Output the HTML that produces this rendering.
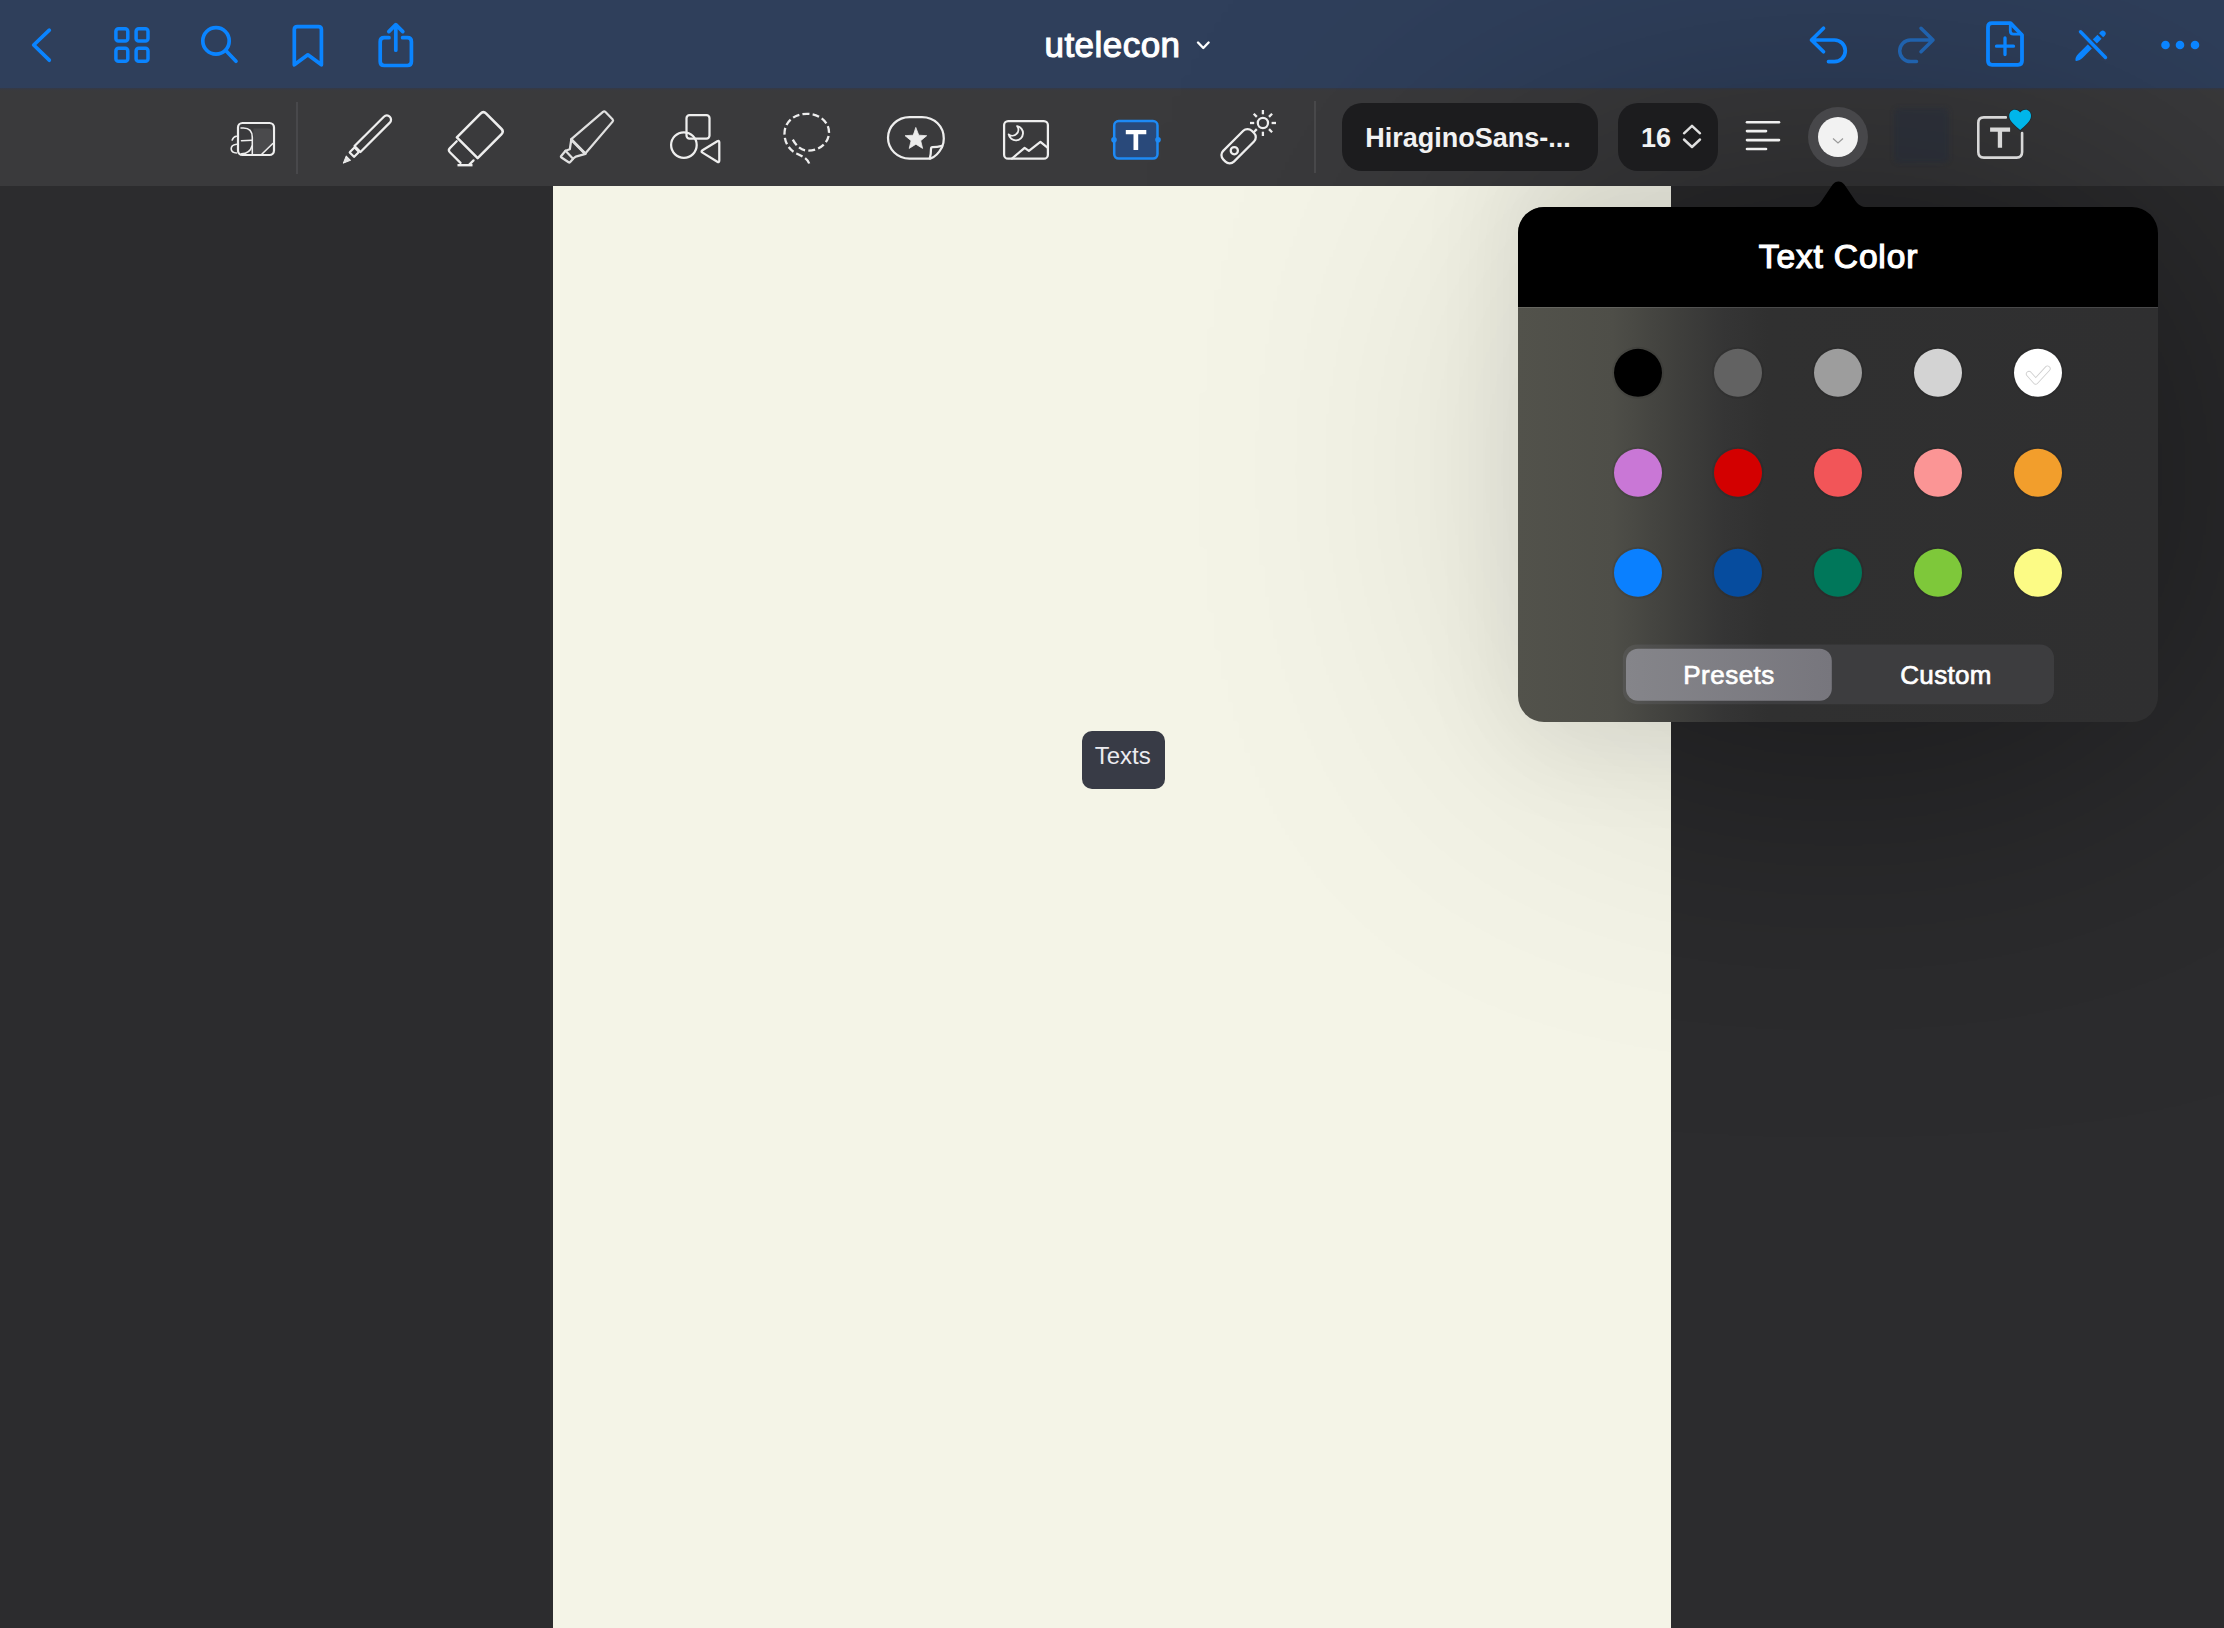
<!DOCTYPE html>
<html><head><meta charset="utf-8">
<style>
html,body{margin:0;padding:0;}
body{width:2224px;height:1628px;position:relative;overflow:hidden;background:#2c2c2e;font-family:"Liberation Sans",sans-serif;}
.abs{position:absolute;}
#nav{left:0;top:0;width:2224px;height:88px;background:#2f3f5b;}
#tool{left:0;top:88px;width:2224px;height:98px;background:linear-gradient(180deg,#33394a 0px,#393a3e 2px,#3a3a3c 4px,#3a3a3c 98px);}
#paper{left:553px;top:186px;width:1118px;height:1442px;background:#f4f4e7;}
#pop{left:1518px;top:207px;width:640px;height:515px;border-radius:26px;overflow:hidden;background:linear-gradient(90deg,#52524b 0px,#4e4e48 95px,#40403d 155px,#353535 205px,#303030 250px,#2f2f30 640px);}
#pophead{left:0;top:0;width:640px;height:100px;background:#000;}
#tip{left:1082px;top:731px;width:83px;height:58px;border-radius:10px;background:#383b46;}
svg{position:absolute;left:0;top:0;}
</style></head>
<body>
<div id="nav" class="abs"></div>
<div id="tool" class="abs"></div>
<div id="paper" class="abs"></div>
<div id="tip" class="abs"></div>
<svg width="2224" height="1628" style="position:absolute;left:0;top:0">
  <defs>
    <filter id="sh2" x="-150%" y="-150%" width="400%" height="400%"><feGaussianBlur stdDeviation="185"/></filter>
    <clipPath id="cpPaper"><rect x="553" y="186" width="1118" height="1442"/></clipPath>
    <clipPath id="cpDark"><path d="M0,0 H2224 V1628 H0 Z M553,186 V1628 H1671 V186 Z" clip-rule="evenodd"/></clipPath>
  </defs>
  <g clip-path="url(#cpDark)"><rect x="1518" y="217" width="640" height="515" rx="26" fill="#000" opacity="0.55" filter="url(#sh2)"/></g>
  <filter id="sh3" x="-50%" y="-50%" width="200%" height="200%"><feGaussianBlur stdDeviation="55"/></filter>
  <g clip-path="url(#cpPaper)"><rect x="1518" y="200" width="640" height="540" rx="26" fill="#000" opacity="0.12" filter="url(#sh2)"/><rect x="1518" y="150" width="640" height="590" rx="26" fill="#000" opacity="0.085" filter="url(#sh3)"/></g>
</svg>
<div id="pop" class="abs"><div id="pophead" class="abs"></div><div class="abs" style="left:0;top:100px;width:640px;height:1px;background:rgba(255,255,255,0.12)"></div></div>
<svg width="2224" height="1628" viewBox="0 0 2224 1628">
  <!-- NAV ICONS -->
  <g fill="none" stroke="#0a84ff" stroke-width="3.7" stroke-linecap="round" stroke-linejoin="round">
    <path d="M49.3,30.2 L33.7,45 L49.3,60.2"/>
    <rect x="115.9" y="28.7" width="11.9" height="12.4" rx="2.6" stroke-width="3.5"/>
    <rect x="136.1" y="28.7" width="11.9" height="12.4" rx="2.6" stroke-width="3.5"/>
    <rect x="115.9" y="48.3" width="11.9" height="13" rx="2.6" stroke-width="3.5"/>
    <rect x="136.1" y="48.3" width="11.9" height="13" rx="2.6" stroke-width="3.5"/>
    <circle cx="216" cy="40.9" r="13.2"/>
    <path d="M226,50.8 L236,61.2"/>
    <path d="M294.3,29.6 Q294.3,26.6 297.3,26.6 L318.4,26.6 Q321.4,26.6 321.4,29.6 L321.4,64.8 L307.85,54.8 L294.3,64.8 Z"/>
    <path d="M389,37.7 L384.2,37.7 Q380.2,37.7 380.2,41.7 L380.2,61.5 Q380.2,65.5 384.2,65.5 L407.4,65.5 Q411.4,65.5 411.4,61.5 L411.4,41.7 Q411.4,37.7 407.4,37.7 L402.6,37.7"/>
    <path d="M395.8,50.2 L395.8,25 M388.8,31.6 L395.8,24.6 L402.8,31.6"/>
    <path d="M1823.5,28.3 L1811.5,40 L1823.5,51.7 M1811.5,40 L1834.5,40 A10.8,10.8 0 0 1 1834.5,61.6 L1828.5,61.6"/>
    <path d="M1992.5,23.2 L2010.5,23.2 L2022,35 L2022,60.8 Q2022,64.8 2018,64.8 L1992,64.8 Q1988,64.8 1988,60.8 L1988,27.2 Q1988,23.2 1992,23.2 Z" stroke-width="3.8"/>
    <path d="M2010.3,24 L2010.3,31 Q2010.3,34.2 2013.5,34.2 L2021.5,34.2" stroke-width="2.8"/>
    <path d="M2005,38 L2005,54.5 M1996.5,46.2 L2013.5,46.2" stroke-width="3.3"/>
  </g>
  <g fill="none" stroke="#2062ad" stroke-width="3.5" stroke-linecap="round" stroke-linejoin="round">
    <path d="M1921,28.3 L1933,40 L1921,51.7 M1933,40 L1910.5,40 A10.8,10.8 0 0 0 1910.5,61.6 L1916.5,61.6"/>
  </g>
  <g fill="#0a84ff">
    <g transform="translate(2075.5,60.8) rotate(-45)">
      <path d="M0,0 Q2,-2.9 7,-2.9 L34,-2.9 L34,2.9 L7,2.9 Q2,2.9 0,0 Z"/>
      <path d="M36.2,-2.9 L38.5,-2.9 A2.9,2.9 0 0 1 38.5,2.9 L36.2,2.9 Z"/>
    </g>
    <circle cx="2165.5" cy="45" r="4.3"/>
    <circle cx="2180" cy="45" r="4.3"/>
    <circle cx="2195" cy="45" r="4.3"/>
  </g>
  <path d="M2080.5,31.8 L2105.5,57.5" stroke="#2e3c57" stroke-width="7" stroke-linecap="round"/>
  <path d="M2080.5,31.8 L2105.5,57.5" stroke="#0a84ff" stroke-width="3.4" stroke-linecap="round"/>
  <text x="1112.5" y="57.3" font-family="Liberation Sans" font-size="35" letter-spacing="0.45" fill="#ffffff" stroke="#ffffff" stroke-width="1.1" text-anchor="middle">utelecon</text>
  <path d="M1198,42.5 L1203.3,48 L1208.6,42.5" fill="none" stroke="#fff" stroke-width="2.4" stroke-linecap="round" stroke-linejoin="round"/>

  <!-- TOOLBAR -->
  <line x1="297" y1="102" x2="297" y2="174" stroke="#4e4e50" stroke-width="1.5"/>
  <line x1="1315" y1="101" x2="1315" y2="173" stroke="#4e4e50" stroke-width="1.5"/>
  <rect x="1342" y="103" width="256" height="68" rx="20" fill="#1c1c1e"/>
  <rect x="1618" y="103" width="100" height="68" rx="20" fill="#1c1c1e"/>
  <text x="1468" y="146.5" font-family="Liberation Sans" font-weight="bold" font-size="27" fill="#f2f2f2" text-anchor="middle">HiraginoSans-...</text>
  <text x="1656" y="146.5" font-family="Liberation Sans" font-weight="bold" font-size="27" fill="#f2f2f2" text-anchor="middle">16</text>
  <path d="M1684,133.3 L1692,125.8 L1700,133.3 M1684,139.5 L1692,147 L1700,139.5" fill="none" stroke="#e0e0e0" stroke-width="2.4" stroke-linecap="round" stroke-linejoin="round"/>
  <g stroke="#f0f0f0" stroke-width="2.6" stroke-linecap="round">
    <line x1="1747" y1="122.3" x2="1779" y2="122.3"/>
    <line x1="1747" y1="131.1" x2="1766" y2="131.1"/>
    <line x1="1747" y1="140.1" x2="1779" y2="140.1"/>
    <line x1="1747" y1="149" x2="1766" y2="149"/>
  </g>
  <circle cx="1838" cy="137" r="30" fill="#47474a"/>
  <circle cx="1838" cy="137" r="20" fill="#f2f2f2"/>
  <path d="M1833,138.5 L1838,143 L1843,138.5" fill="none" stroke="#9a9a9a" stroke-width="1.2"/>
  <defs><filter id="fblur" x="-20%" y="-20%" width="140%" height="140%"><feGaussianBlur stdDeviation="2.5"/></filter></defs>
  <rect x="1894" y="108" width="55" height="55" rx="6" fill="#232a3a" opacity="0.45" filter="url(#fblur)"/>

  <!-- TOOLBAR ICONS -->
  <g fill="none" stroke="#eeeeee" stroke-width="2.25" stroke-linecap="round" stroke-linejoin="round">
    <!-- readonly a box -->
    <rect x="238" y="123" width="36" height="32" rx="4.5" stroke-width="2.2"/>
    <path d="M253.5,128.5 L268,128.5 Q272.5,128.5 272.5,133 L272.5,143.5 L261.5,154 L253.5,154 Z" fill="#4a4a4c" stroke="none"/>
    <path d="M272.8,143.5 L261.5,154.5" stroke-width="1.6"/>
    <g stroke-width="1.6">
      <path d="M241,128 L243.5,128 Q252.3,128 252.3,137.5 L252.3,154"/>
      <path d="M252,140.3 L241.5,140.8"/>
      <path d="M252,146 Q250,153.5 241.5,153.8"/>
      <path d="M232.2,140 Q233.5,136.5 236.5,136.3"/>
      <path d="M236.5,144.3 Q231,145 231.2,149 Q231.5,152.8 236.5,153"/>
    </g>
    <!-- pen -->
    <g transform="translate(343,163.5) rotate(-45)">
      <path d="M0.5,0 L7.5,-3 L7.5,3 Z" fill="#e6e6e6" stroke-width="1"/>
      <rect x="12.5" y="-3.2" width="7" height="6.4" rx="0.5"/>
      <path d="M20.5,-4.2 L62,-4.2 A4.2,4.2 0 0 1 62,4.2 L20.5,4.2 Z"/>
    </g>
    <!-- eraser -->
    <g transform="translate(455.3,137.3) rotate(-45)">
      <path d="M1.1,1.1 L34.6,1.1 Q38.6,1.1 38.6,5.1 L38.6,26.5 Q38.6,30.5 34.6,30.5 L1.1,30.5 Z" stroke-width="2.5"/>
      <path d="M-1.8,3.8 L-11.5,3.8 Q-14.4,3.8 -14.4,6.7 L-14.4,21.8"/>
      <path d="M-9.4,29.2 L-3.4,29.2"/>
    </g>
    <path d="M457.5,165.2 L472.5,165.2" stroke-width="2.4" stroke-linecap="butt"/>
    <!-- highlighter -->
    <path d="M571.3,139.2 L603,111.8 Q604.3,110.8 605.5,112 L612.5,119.2 Q613.6,120.4 612.6,121.6 L585.3,153.6 Z" stroke="#e0e0e0"/>
    <path d="M571.4,139.7 L585,153.4" stroke="#e0e0e0" stroke-width="2.8"/>
    <path d="M571.3,139.5 L569.8,149.3 L565.5,150.8 L573,158.7 L575.8,156.6 L585.5,153.8" stroke="#e0e0e0"/>
    <path d="M565.5,150.8 L561.2,155.9 Q560.5,156.8 561.5,157.5 L568.6,162.3 Q569.4,162.8 570.2,162 L573,159" stroke="#e0e0e0"/>
    <!-- shapes -->
    <rect x="686.5" y="115.2" width="23" height="23.4" rx="3"/>
    <circle cx="683.9" cy="145.1" r="12.8"/>
    <path d="M702.5,150.2 L717.3,141.2 Q719.3,140 719.3,142.3 L719.3,160.6 Q719.3,162.9 717.3,161.7 L702.5,152.6 Q700.6,151.4 702.5,150.2 Z"/>
    <!-- lasso -->
    <path d="M809.2,163.5 C807.5,158.5 802,156 796.5,153.5 C788.5,149.5 784.5,142 784.5,133.5 C784.5,121.5 794.5,113.8 807,113.8 C819.5,113.8 829,122 829,132.3 C829,143 819.5,150.6 808,150.6 C800.5,150.6 795.5,145 792.3,138.7" stroke-dasharray="6.8 3.2" stroke-linecap="butt" stroke-width="2.3"/>
    <!-- sticker -->
    <path d="M909.5,117 L922,117 C934.5,117 943.8,126.5 943.8,138.5 C943.8,141.6 943.2,144.8 942,147.2 C938.5,153.8 933.5,157.5 930.2,158.6 L909.5,158.6 C897.5,158.6 888,149.3 888,137.8 C888,126.3 897.5,117 909.5,117 Z"/>
    <path d="M942.2,145.8 Q937,147.2 932.5,147.2 Q931,147.3 931,149 Q931,154 929.8,158.4"/>
    <path d="M915.9,127.8 L918.8,135.2 L926.7,135.7 L920.7,140.7 L922.6,148.4 L915.9,144.2 L909.2,148.4 L911.1,140.7 L905.1,135.7 L913.0,135.2 Z" fill="#ececec" stroke="#ececec" stroke-width="0.8"/>
    <!-- image -->
    <rect x="1004.1" y="121" width="43.8" height="37.7" rx="4"/>
    <path d="M1017.2,126.1 A7.2,7.2 0 1 1 1008.7,134.4 A6,6 0 0 0 1017.2,126.1 Z" stroke-width="1.9"/>
    <path d="M1012,158.5 L1024.6,147.8 L1028.9,150.8 L1040.4,141.9 L1047.2,147.4"/>
    <!-- laser -->
    <g transform="translate(1238.6,146.2) rotate(-45)">
      <rect x="-20.2" y="-7.6" width="40.4" height="15.2" rx="6"/>
    </g>
    <circle cx="1234.3" cy="150.7" r="3.6"/>
    <circle cx="1262.9" cy="123" r="5.1"/>
    <g stroke-width="2.3" stroke-linecap="butt">
      <path d="M1262.9,110 L1262.9,114.3"/>
      <path d="M1262.9,131.7 L1262.9,136"/>
      <path d="M1250,123 L1254.2,123"/>
      <path d="M1271.6,123 L1276,123"/>
      <path d="M1253.7,113.8 L1256.8,116.9"/>
      <path d="M1269,129.1 L1272.1,132.2"/>
      <path d="M1272.1,113.8 L1269,116.9"/>
      <path d="M1256.8,129.1 L1253.7,132.2"/>
    </g>
  </g>
  <!-- selected text tool -->
  <rect x="1114.2" y="121" width="43.3" height="37.6" rx="4.5" fill="#29497a" stroke="#1e8af5" stroke-width="2.5"/>
  <circle cx="1114" cy="139.7" r="2.8" fill="#1e8af5"/>
  <circle cx="1158" cy="139.7" r="2.8" fill="#1e8af5"/>
  <path d="M1125.8,129.9 L1146.3,129.9 L1146.3,134.2 L1138.2,134.2 L1138.2,150 L1133.5,150 L1133.5,134.2 L1125.8,134.2 Z" fill="#ffffff"/>
  <!-- T box with heart -->
  <path d="M2005.8,117.4 L1983.8,117.4 Q1978.3,117.4 1978.3,122.9 L1978.3,152.1 Q1978.3,157.6 1983.8,157.6 L2016.6,157.6 Q2022.1,157.6 2022.1,152.1 L2022.1,133.1" fill="none" stroke="#d8d8d8" stroke-width="2.6" stroke-linecap="round"/>
  <path d="M1990.1,127.5 L2010.1,127.5 L2010.1,131.8 L2002.1,131.8 L2002.1,147.7 L1997.8,147.7 L1997.8,131.8 L1990.1,131.8 Z" fill="#d8d8d8"/>
  <path d="M2020.2,130.1 C2016,126 2009.2,121.5 2009.2,116 C2009.2,112.3 2011.8,109.8 2014.8,109.8 C2017.2,109.8 2019,111 2020.2,112.6 C2021.4,111 2023.2,109.8 2025.6,109.8 C2028.6,109.8 2031,112.3 2031,116 C2031,121.5 2024.4,126 2020.2,130.1 Z" fill="#00b6ea" stroke="#1e2a30" stroke-width="1.6" paint-order="stroke"/>

  <!-- POPOVER CONTENT -->
  <path d="M1807,207.5 C1814,207.5 1818.5,205.5 1821.5,201 L1832.5,184.8 C1835.5,180.3 1841.5,180.3 1844.5,184.8 L1855.5,201 C1858.5,205.5 1863,207.5 1870,207.5 Z" fill="#000"/>
  <text x="1838.5" y="268.2" font-family="Liberation Sans" font-size="33.5" letter-spacing="0.85" fill="#ffffff" stroke="#ffffff" stroke-width="1.2" text-anchor="middle">Text Color</text>
  <g fill="none" stroke="#000" stroke-opacity="0.07" stroke-width="2"><circle cx="1638" cy="372.8" r="25"/><circle cx="1738" cy="372.8" r="25"/><circle cx="1838" cy="372.8" r="25"/><circle cx="1938" cy="372.8" r="25"/><circle cx="2038" cy="372.8" r="25"/><circle cx="1638" cy="472.8" r="25"/><circle cx="1738" cy="472.8" r="25"/><circle cx="1838" cy="472.8" r="25"/><circle cx="1938" cy="472.8" r="25"/><circle cx="2038" cy="472.8" r="25"/><circle cx="1638" cy="572.8" r="25"/><circle cx="1738" cy="572.8" r="25"/><circle cx="1838" cy="572.8" r="25"/><circle cx="1938" cy="572.8" r="25"/><circle cx="2038" cy="572.8" r="25"/></g>
  <g>
    <circle cx="1638" cy="372.8" r="24" fill="#000000"/>
    <circle cx="1738" cy="372.8" r="24" fill="#626262"/>
    <circle cx="1838" cy="372.8" r="24" fill="#9d9d9d"/>
    <circle cx="1938" cy="372.8" r="24" fill="#d3d3d3"/>
    <circle cx="2038" cy="372.8" r="24" fill="#ffffff"/>
    <circle cx="1638" cy="472.8" r="24" fill="#c977d6"/>
    <circle cx="1738" cy="472.8" r="24" fill="#d30000"/>
    <circle cx="1838" cy="472.8" r="24" fill="#f25558"/>
    <circle cx="1938" cy="472.8" r="24" fill="#fb9595"/>
    <circle cx="2038" cy="472.8" r="24" fill="#f29e2c"/>
    <circle cx="1638" cy="572.8" r="24" fill="#0a80ff"/>
    <circle cx="1738" cy="572.8" r="24" fill="#064c9e"/>
    <circle cx="1838" cy="572.8" r="24" fill="#00775a"/>
    <circle cx="1938" cy="572.8" r="24" fill="#7ec83a"/>
    <circle cx="2038" cy="572.8" r="24" fill="#fcfb85"/>
  </g>
  <path d="M2029,374 L2035.7,381.5 L2047.5,368.7" fill="none" stroke="#cfcfcf" stroke-width="6.2" stroke-linecap="round" stroke-linejoin="round"/>
  <path d="M2029,374 L2035.7,381.5 L2047.5,368.7" fill="none" stroke="#ffffff" stroke-width="4.4" stroke-linecap="round" stroke-linejoin="round"/>
  <rect x="1622.8" y="644.5" width="431.2" height="59.7" rx="14" fill="#8e8e98" fill-opacity="0.15"/>
  <defs><linearGradient id="selg" x1="0" y1="0" x2="1" y2="0"><stop offset="0" stop-color="#85858a"/><stop offset="1" stop-color="#77767d"/></linearGradient></defs>
  <rect x="1626" y="648.8" width="205.8" height="51.9" rx="12" fill="url(#selg)"/>
  <text x="1729" y="683.6" font-family="Liberation Sans" font-size="26" letter-spacing="0.5" fill="#ffffff" stroke="#ffffff" stroke-width="0.7" text-anchor="middle">Presets</text>
  <text x="1946" y="683.6" font-family="Liberation Sans" font-size="26" letter-spacing="0.3" fill="#ffffff" stroke="#ffffff" stroke-width="0.7" text-anchor="middle">Custom</text>
  <!-- tooltip text -->
  <text x="1122.7" y="764" font-family="Liberation Sans" font-size="24" fill="#ebebf0" text-anchor="middle">Texts</text>
</svg>
</body></html>
